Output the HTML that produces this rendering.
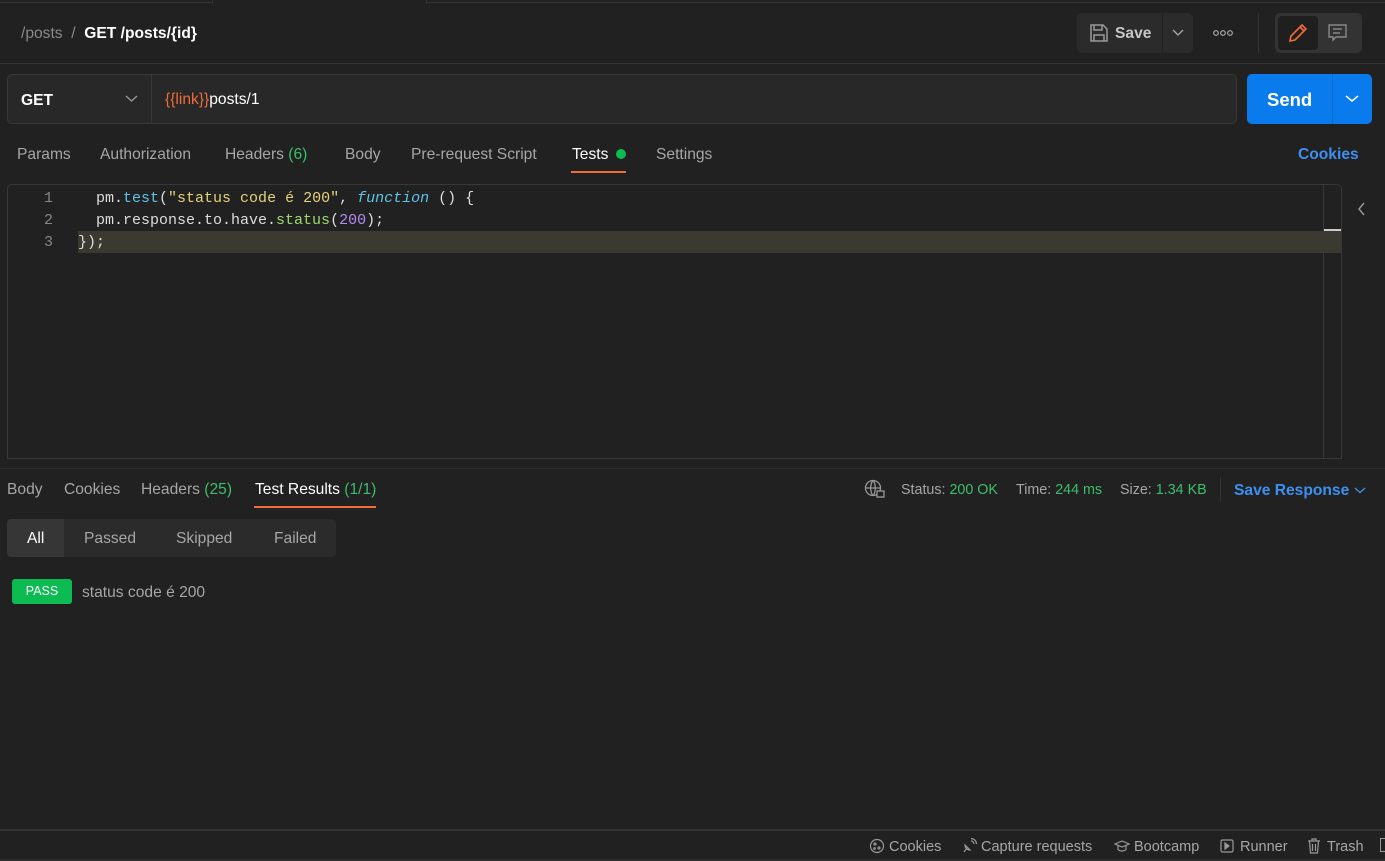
<!DOCTYPE html>
<html><head><style>
*{box-sizing:border-box;margin:0;padding:0}
body{width:1385px;height:861px;background:#212121;font-family:"Liberation Sans",sans-serif;color:#a6a6a6;position:relative;overflow:hidden;font-size:15.6px}
.a{position:absolute;white-space:nowrap}
.mono{font-family:"Liberation Mono",monospace;font-size:15px}
.g{color:#3bbf6b}
.f{font-size:14.5px;top:839px}
</style></head><body>
<div class="a" style="left:0;top:0;width:1385px;height:3px;border-bottom:1px solid #333"></div>
<div class="a" style="left:212px;top:0;width:215px;height:4px;background:#212121;border-left:1px solid #333;border-right:1px solid #333"></div>
<div class="a" style="left:21px;top:25px;font-size:15.6px"><span style="color:#8a8a8a">/posts</span><span style="color:#8a8a8a">&nbsp;&nbsp;/&nbsp;&nbsp;</span><b style="color:#fff">GET /posts/{id}</b></div>
<div class="a" style="left:1077px;top:13px;width:85px;height:40px;background:#2b2b2b;border-radius:5px 0 0 5px"></div>
<svg class="a" style="left:1089px;top:23px" width="20" height="20" viewBox="0 0 20 20" fill="none" stroke="#9a9a9a" stroke-width="1.5"><path d="M2 2h12l4 4v12H2z"/><path d="M5 2v5h8V2M5 18v-6h10v6"/></svg>
<div class="a" style="left:1115px;top:25px;color:#c6c6c6;font-weight:bold;font-size:15.6px">Save</div>
<div class="a" style="left:1163px;top:13px;width:30px;height:40px;background:#2b2b2b;border-radius:0 5px 5px 0"></div>
<svg class="a" style="left:1172px;top:28px" width="12" height="10"><path d="M1 2l5 5 5-5" fill="none" stroke="#aaa" stroke-width="1.3"/></svg>
<svg class="a" style="left:1213px;top:29px" width="22" height="8" fill="none" stroke="#aaa" stroke-width="1.2"><circle cx="3" cy="4" r="2.3"/><circle cx="10" cy="4" r="2.3"/><circle cx="17" cy="4" r="2.3"/></svg>
<div class="a" style="left:1258px;top:13px;width:1px;height:40px;background:#333"></div>
<div class="a" style="left:1275px;top:13px;width:87px;height:40px;background:#333;border-radius:5px"></div>
<div class="a" style="left:1278px;top:16px;width:40px;height:34px;background:#1f1f1f;border-radius:4px"></div>
<svg class="a" style="left:1287px;top:22px" width="22" height="22" viewBox="0 0 22 22" fill="none" stroke="#f26b3a" stroke-width="1.6"><path d="M3 19l1-5L15 3l4 4L8 18z M13 5l4 4"/></svg>
<svg class="a" style="left:1327px;top:23px" width="22" height="20" viewBox="0 0 22 20" fill="none" stroke="#888" stroke-width="1.4"><path d="M2 2h17v12H9l-3 3v-3H2z M6 6h9M6 10h7"/></svg>
<div class="a" style="left:0;top:63px;width:1385px;height:1px;background:#333"></div>
<div class="a" style="left:7px;top:74px;width:1230px;height:50px;border:1px solid #383838;border-radius:5px;background:#282828"></div>
<div class="a" style="left:151px;top:75px;width:1px;height:48px;background:#383838"></div>
<div class="a" style="left:21px;top:92px;color:#fff;font-weight:bold;font-size:15.6px">GET</div>
<svg class="a" style="left:125px;top:94px" width="13" height="10"><path d="M1 2l5.5 5 5.5-5" fill="none" stroke="#999" stroke-width="1.3"/></svg>
<div class="a" style="left:165px;top:91px;font-size:15.6px"><span style="color:#f26b3a">{{link}}</span><span style="color:#fff">posts/1</span></div>
<div class="a" style="left:1247px;top:74px;width:125px;height:50px;background:#097bed;border-radius:5px"></div>
<div class="a" style="left:1332px;top:74px;width:1px;height:50px;background:#0a6ccf"></div>
<div class="a" style="left:1267px;top:89px;color:#fff;font-weight:bold;font-size:18.5px">Send</div>
<svg class="a" style="left:1345px;top:94px" width="14" height="10"><path d="M1 2l6 5 6-5" fill="none" stroke="#fff" stroke-width="1.5"/></svg>
<div class="a" style="left:17px;top:146px">Params</div>
<div class="a" style="left:100px;top:146px">Authorization</div>
<div class="a" style="left:225px;top:146px">Headers <span class="g">(6)</span></div>
<div class="a" style="left:345px;top:146px">Body</div>
<div class="a" style="left:411px;top:146px">Pre-request Script</div>
<div class="a" style="left:572px;top:146px;color:#fff">Tests</div>
<div class="a" style="left:616px;top:149px;width:10px;height:10px;border-radius:50%;background:#0cbb52"></div>
<div class="a" style="left:571px;top:171px;width:55px;height:2px;background:#f26b3a"></div>
<div class="a" style="left:656px;top:146px">Settings</div>
<div class="a" style="left:1298px;top:146px;color:#3d8ff0;font-weight:bold">Cookies</div>
<div class="a" style="left:7px;top:184px;width:1335px;height:275px;border:1px solid #383838;border-radius:5px 5px 0 0"></div>
<div class="a" style="left:78px;top:231px;width:1263px;height:22px;background:#3b3a30"></div>
<div class="a" style="left:1323px;top:185px;width:1px;height:273px;background:#383838"></div>
<div class="a" style="left:1324px;top:229px;width:17px;height:2px;background:#ccc"></div>
<div class="a mono" style="left:44px;top:188px;color:#888;line-height:22px">1<br>2<br>3</div>
<div class="a mono" style="left:78px;top:188px;line-height:22px;color:#ddd">
&nbsp;&nbsp;pm.<span style="color:#5fc3e8">test</span>(<span style="color:#e6d27a">"status code é 200"</span>, <i style="color:#5fc3e8">function</i> () {<br>
&nbsp;&nbsp;pm.response.to.have.<span style="color:#9bd96e">status</span>(<span style="color:#b48cf2">200</span>);<br>
});</div>
<svg class="a" style="left:1357px;top:202px" width="10" height="14"><path d="M7 1L2 7l5 6" fill="none" stroke="#999" stroke-width="1.4"/></svg>
<div class="a" style="left:0;top:468px;width:1385px;height:1px;background:#2e2e2e"></div>
<div class="a" style="left:7px;top:481px">Body</div>
<div class="a" style="left:64px;top:481px">Cookies</div>
<div class="a" style="left:141px;top:481px">Headers <span class="g">(25)</span></div>
<div class="a" style="left:255px;top:481px;color:#fff">Test Results <span class="g">(1/1)</span></div>
<div class="a" style="left:254px;top:506px;width:122px;height:2px;background:#f26b3a"></div>
<svg class="a" style="left:864px;top:479px" width="22" height="20" viewBox="0 0 22 20" fill="none" stroke="#999" stroke-width="1.3"><circle cx="9" cy="9" r="7.5"/><path d="M1.5 9h15M9 1.5c-3 3-3 12 0 15M9 1.5c3 3 3 12 0 15"/><rect x="13" y="12" width="7" height="6" fill="#212121"/></svg>
<div class="a" style="left:901px;top:482px;font-size:14.3px">Status: <span class="g">200 OK</span></div>
<div class="a" style="left:1016px;top:482px;font-size:14.3px">Time: <span class="g">244 ms</span></div>
<div class="a" style="left:1120px;top:482px;font-size:14.3px">Size: <span class="g">1.34 KB</span></div>
<div class="a" style="left:1220px;top:477px;width:1px;height:25px;background:#333"></div>
<div class="a" style="left:1234px;top:482px;color:#3d8ff0;font-weight:bold">Save Response</div>
<svg class="a" style="left:1354px;top:486px" width="12" height="9"><path d="M1 2l5 4.5 5-4.5" fill="none" stroke="#3d8ff0" stroke-width="1.3"/></svg>
<div class="a" style="left:7px;top:519px;width:329px;height:38px;background:#2b2b2b;border-radius:4px"></div>
<div class="a" style="left:7px;top:519px;width:57px;height:38px;background:#363636;border-radius:4px 0 0 4px"></div>
<div class="a" style="left:27px;top:530px;color:#fff">All</div>
<div class="a" style="left:84px;top:530px">Passed</div>
<div class="a" style="left:176px;top:530px">Skipped</div>
<div class="a" style="left:274px;top:530px">Failed</div>
<div class="a" style="left:12px;top:579px;width:60px;height:25px;background:#0cbb52;border-radius:3px;color:#fff;font-size:12.5px;text-align:center;line-height:25px">PASS</div>
<div class="a" style="left:82px;top:584px">status code é 200</div>
<div class="a" style="left:0;top:829px;width:1385px;height:2px;background:#333"></div>
<div class="a" style="left:0;top:859px;width:1385px;height:2px;background:#2e2e2e"></div>
<svg class="a" style="left:869px;top:838px" width="16" height="16" fill="none" stroke="#999" stroke-width="1.2"><circle cx="8" cy="8" r="6.5"/><circle cx="6" cy="6" r="1"/><circle cx="10" cy="10" r="1"/><circle cx="5.5" cy="10.5" r=".8"/></svg>
<div class="a f" style="left:889px">Cookies</div>
<svg class="a" style="left:961px;top:838px" width="16" height="16" fill="none" stroke="#999" stroke-width="1.2"><path d="M3 14l3-4M4 7a5 5 0 0 0 5 5zM10 3a3 3 0 0 1 3 3M10 0.5a5.5 5.5 0 0 1 5.5 5.5"/></svg>
<div class="a f" style="left:981px">Capture requests</div>
<svg class="a" style="left:1114px;top:839px" width="16" height="14" fill="none" stroke="#999" stroke-width="1.2"><path d="M1 5l7-3 7 3-7 3z M4 6.5v4c2 2 6 2 8 0v-4"/></svg>
<div class="a f" style="left:1134px">Bootcamp</div>
<svg class="a" style="left:1220px;top:839px" width="14" height="14" fill="none" stroke="#999" stroke-width="1.2"><rect x="1" y="1" width="12" height="12" rx="1.5"/><path d="M5 4l4 3-4 3z" fill="#999"/></svg>
<div class="a f" style="left:1240px">Runner</div>
<svg class="a" style="left:1307px;top:838px" width="14" height="16" fill="none" stroke="#999" stroke-width="1.2"><path d="M1 3h12M5 3V1h4v2M2.5 3l1 12h7l1-12M5.5 6v7M8.5 6v7"/></svg>
<div class="a f" style="left:1327px">Trash</div>
<div class="a" style="left:1380px;top:838px;width:8px;height:14px;border:1px solid #999"></div>
</body></html>
